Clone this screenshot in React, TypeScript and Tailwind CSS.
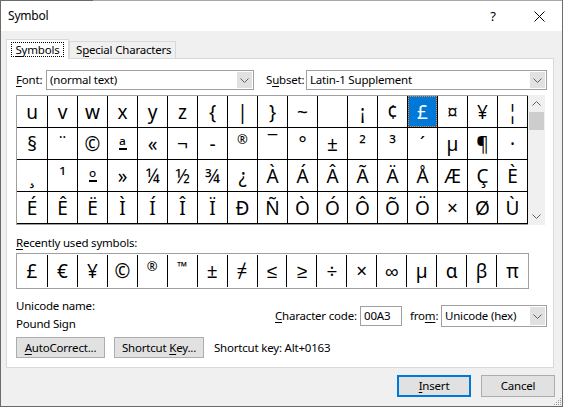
import React from 'react';

const GRID: string[][] = [
  ['u', 'v', 'w', 'x', 'y', 'z', '{', '|', '}', '~', '\u00a0', '¡', '¢', '£', '¤', '¥', '¦'],
  ['§', '¨', '©', 'ª', '«', '¬', '-', '®', '¯', '°', '±', '²', '³', '´', 'µ', '¶', '·'],
  ['¸', '¹', 'º', '»', '¼', '½', '¾', '¿', 'À', 'Á', 'Â', 'Ã', 'Ä', 'Å', 'Æ', 'Ç', 'È'],
  ['É', 'Ê', 'Ë', 'Ì', 'Í', 'Î', 'Ï', 'Ð', 'Ñ', 'Ò', 'Ó', 'Ô', 'Õ', 'Ö', '×', 'Ø', 'Ù'],
];

const RECENT = ['£', '€', '¥', '©', '®', '™', '±', '≠', '≤', '≥', '÷', '×', '∞', 'µ', 'α', 'β', 'π'];

function U({ children }: { children: React.ReactNode }) {
  return <span className="underline decoration-1 underline-offset-2">{children}</span>;
}

// Segoe UI draws these small and raised; Noto Sans does not, so shrink them by hand
function Glyph({ ch }: { ch: string }) {
  if (ch === '®') return <span className="mb-[9px] text-[13px] leading-none font-medium">®</span>;
  if (ch === '™') return <span className="mb-[9px] text-[13px] leading-none font-semibold">™</span>;
  if (ch === 'ª' || ch === 'º')
    return (
      <span className="flex flex-col items-center leading-none">
        <span className="text-[19px]">{ch}</span>
        <span className="-mt-[8px] h-[1.5px] w-[8px] bg-black" />
      </span>
    );
  return <>{ch}</>;
}

function Chevron({ up = false }: { up?: boolean }) {
  return (
    <svg width="9" height="5" viewBox="0 0 9 5" className="block">
      <polyline
        points={up ? '0.5,4.5 4.5,0.5 8.5,4.5' : '0.5,0.5 4.5,4.5 8.5,0.5'}
        fill="none"
        stroke="#606060"
        strokeWidth="1"
      />
    </svg>
  );
}

function Combo({ width, height, text }: { width: string; height: string; text: string }) {
  return (
    <div className={`flex ${height} ${width} border border-[#a0a0a0] bg-white`}>
      <span className="flex flex-1 items-center truncate pl-[3px]">{text}</span>
      <span className="flex w-[17px] items-center justify-center border border-white bg-[#e1e1e1]">
        <Chevron />
      </span>
    </div>
  );
}

function Button({ children, primary = false, className = '' }: { children: React.ReactNode; primary?: boolean; className?: string }) {
  return (
    <div
      className={`flex items-center justify-center bg-[#e1e1e1] ${
        primary ? 'border-2 border-[#0078d7]' : 'border border-[#adadad]'
      } ${className}`}
    >
      {children}
    </div>
  );
}

export default function App() {
  return (
    <div className="relative flex h-[407px] w-[563px] flex-col overflow-hidden border-x border-b border-[#6b6b6b] bg-[#f0f0f0] font-['Noto_Sans',sans-serif] text-[11.5px] leading-[16px] tracking-[-0.2px] whitespace-nowrap text-black select-none">
      <div className="flex h-px shrink-0">
        <div className="w-[92px] bg-[#6b6b6b]" />
        <div className="flex-1 bg-[#a8a8a8]" />
      </div>

      {/* title bar */}
      <div className="flex h-[30px] shrink-0 items-center bg-white">
        <span className="pl-[7px] text-[12px]">Symbol</span>
        <span className="ml-auto flex h-full w-[46px] items-center justify-center text-[13px]">?</span>
        <span className="flex h-full w-[46px] items-center justify-center">
          <svg width="11" height="11" viewBox="0 0 11 11">
            <path d="M0.5 0.5 L10.5 10.5 M10.5 0.5 L0.5 10.5" stroke="#000" strokeWidth="1" />
          </svg>
        </span>
      </div>

      {/* tabs */}
      <div className="mt-[8px] flex h-[19px] shrink-0 items-end pl-[5px]">
        <div className="relative z-10 -mb-px flex h-[20px] w-[63px] items-start border border-b-0 border-[#d9d9d9] bg-white pt-[2px]">
          <span className="mx-[4px] flex h-[15px] flex-1 items-center justify-center border border-dotted border-black">
            <U>S</U>ymbols
          </span>
        </div>
        <div className="flex h-[17px] w-[107px] items-center border border-b-0 border-[#d9d9d9] bg-[#f0f0f0] pl-[6px]">
          S<U>p</U>ecial Characters
        </div>
      </div>

      {/* panel */}
      <div className="ml-[5px] flex h-[310px] w-[548px] shrink-0 flex-col border border-[#d9d9d9] bg-white pl-[9px] pt-[11px]">
        <div className="flex h-[20px] items-center">
          <span className="w-[30px]">
            <U>F</U>ont:
          </span>
          <Combo width="w-[208px]" height="h-[20px]" text="(normal text)" />
          <span className="ml-[12px] w-[40px]">
            S<U>u</U>bset:
          </span>
          <Combo width="w-[241px]" height="h-[20px]" text="Latin-1 Supplement" />
        </div>

        {/* symbol grid */}
        <div className="mt-[5px] flex h-[130px]">
          <div className="flex flex-col border-y border-l border-[#a0a0a0]">
            {GRID.map((row, r) => (
              <div key={r} className="flex">
                {row.map((ch, c) => {
                  const selected = r === 0 && c === 13;
                  return (
                    <div
                      key={c}
                      className={`flex h-[32px] items-center justify-center border-r border-b border-black text-[19px] leading-[32px] tracking-normal ${
                        c === 0 ? 'w-[31px]' : 'w-[30px]'
                      } ${selected ? 'bg-[#0078d7] text-white' : ''}`}
                    >
                      {selected ? (
                        <span className="flex h-full w-full items-center justify-center border border-dotted border-[#ff8728]">
                          {ch}
                        </span>
                      ) : (
                        <Glyph ch={ch} />
                      )}
                    </div>
                  );
                })}
              </div>
            ))}
          </div>
          <div className="flex w-[17px] flex-col bg-[#f0f0f0]">
            <div className="flex h-[17px] items-center justify-center">
              <Chevron up />
            </div>
            <div className="mx-px h-[18px] bg-[#cdcdcd]" />
            <div className="mt-auto flex h-[17px] items-center justify-center">
              <Chevron />
            </div>
          </div>
        </div>

        <div className="mt-[10px]">
          <U>R</U>ecently used symbols:
        </div>

        <div className="mt-[2px] flex h-[36px] w-[513px] border border-[#a0a0a0] py-px">
          {RECENT.map((ch, i) => (
            <div
              key={i}
              className={`flex items-center justify-center text-[19px] leading-[32px] tracking-normal ${
                i === 0 || i === RECENT.length - 1 ? 'w-[31px]' : 'w-[30px]'
              } ${i < RECENT.length - 1 ? 'border-r border-black' : ''}`}
            >
              <Glyph ch={ch} />
            </div>
          ))}
        </div>

        <div className="mt-[9px] flex">
          <div className="flex w-[259px] flex-col gap-[2px]">
            <span>Unicode name:</span>
            <span>Pound Sign</span>
          </div>
          <div className="mt-[7px] flex h-[22px] items-center">
            <span className="w-[85px]">
              <U>C</U>haracter code:
            </span>
            <div className="flex h-[20px] w-[42px] items-center border border-[#a0a0a0] bg-white pl-[3px]">00A3</div>
            <span className="ml-[8px] w-[31px]">
              fro<U>m</U>:
            </span>
            <Combo width="w-[106px]" height="h-[22px]" text="Unicode (hex)" />
          </div>
        </div>

        <div className="mt-[5px] flex h-[21px] items-center">
          <Button className="h-[21px] w-[89px]">
            <U>A</U>utoCorrect...
          </Button>
          <Button className="ml-[9px] h-[21px] w-[90px]">
            Shortcut&nbsp;<U>K</U>ey...
          </Button>
          <span className="ml-[10px]">Shortcut key: Alt+0163</span>
        </div>
      </div>

      <div className="mt-[7px] flex justify-end gap-[10px] pr-[7px]">
        <Button primary className="h-[22px] w-[74px]">
          <U>I</U>nsert
        </Button>
        <Button className="h-[22px] w-[74px]">Cancel</Button>
      </div>

      <svg width="10" height="10" viewBox="0 0 10 10" className="absolute right-0 bottom-0">
        <g fill="#9a9a9a">
          <rect x="8" y="2" width="1" height="1" />
          <rect x="6" y="4" width="1" height="1" />
          <rect x="8" y="4" width="1" height="1" />
          <rect x="4" y="6" width="1" height="1" />
          <rect x="6" y="6" width="1" height="1" />
          <rect x="8" y="6" width="1" height="1" />
          <rect x="2" y="8" width="1" height="1" />
          <rect x="4" y="8" width="1" height="1" />
          <rect x="6" y="8" width="1" height="1" />
          <rect x="8" y="8" width="1" height="1" />
        </g>
      </svg>
    </div>
  );
}
